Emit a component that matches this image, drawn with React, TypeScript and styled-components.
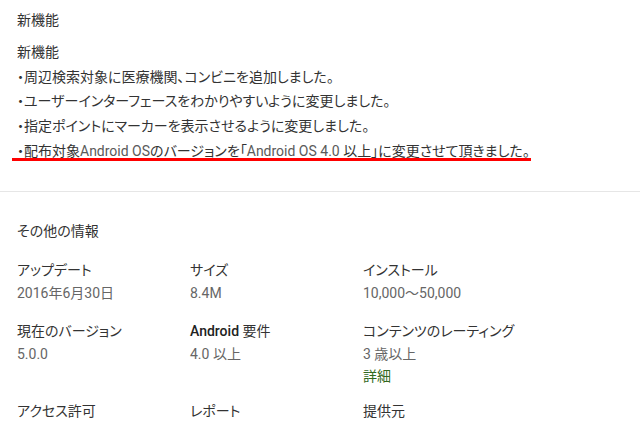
import React from "react";
import styled, { createGlobalStyle } from "styled-components";

const Global = createGlobalStyle`
  html, body { margin: 0; padding: 0; background: #fff; }
  body {
    font-family: Roboto, "Noto Sans CJK JP", sans-serif;
    font-size: 14px;
    color: #333;
    font-feature-settings: "palt";
  }
`;

const Page = styled.div`
  width: 640px;
  height: 427px;
  overflow: hidden;
  background: #fff;
`;

const Section = styled.section<{ $pt: number; $pb: number }>`
  padding: ${(p) => p.$pt}px 17px ${(p) => p.$pb}px;
`;

const Heading = styled.h2`
  margin: 0;
  font-size: 14px;
  font-weight: 400;
  line-height: 20px;
  color: #333;
`;

const Notes = styled.div`
  margin-top: 10px;
  display: flex;
  flex-direction: column;
`;

const NoteLine = styled.div<{ $marked?: boolean }>`
  line-height: 24.7px;
  height: 24.7px;
  white-space: nowrap;
  color: #333;
  position: relative;
  ${(p) =>
    p.$marked &&
    `&::after {
      content: "";
      position: absolute;
      left: -5px;
      width: 519px;
      top: 19px;
      height: 3px;
      background: #ff0000;
    }`}
`;

const Latin = styled.span`
  color: #5a5a5a;
`;

const Divider = styled.hr`
  margin: 0;
  border: 0;
  border-top: 1px solid #e6e6e6;
`;

const Grid = styled.div`
  margin-top: 18px;
  display: grid;
  grid-template-columns: 173px 173px 173px;
  row-gap: 14px;
`;

const Cell = styled.div`
  display: flex;
  flex-direction: column;
  min-height: 47px;
`;

const Label = styled.div`
  line-height: 23px;
  color: #333;
  white-space: nowrap;
`;

const Value = styled.div`
  line-height: 23px;
  color: #666;
  white-space: nowrap;
`;

const Strong = styled.span`
  font-weight: 500;
  color: #222;
`;

const Link = styled.div`
  line-height: 20px;
  color: #33691e;
`;

export default function App() {
  return (
    <Page>
      <Global />
      <Section $pt={10} $pb={28}>
        <Heading>新機能</Heading>
        <Notes>
          <NoteLine>新機能</NoteLine>
          <NoteLine>・周辺検索対象に医療機関、コンビニを追加しました。</NoteLine>
          <NoteLine>・ユーザーインターフェースをわかりやすいように変更しました。</NoteLine>
          <NoteLine>・指定ポイントにマーカーを表示させるように変更しました。</NoteLine>
          <NoteLine $marked>
            ・配布対象<Latin>Android OS</Latin>のバージョンを「<Latin>Android OS 4.0</Latin> 以上」に変更させて頂きました。
          </NoteLine>
        </Notes>
      </Section>
      <Divider />
      <Section $pt={29} $pb={0}>
        <Heading>その他の情報</Heading>
        <Grid>
          <Cell>
            <Label>アップデート</Label>
            <Value>2016年6月30日</Value>
          </Cell>
          <Cell>
            <Label>サイズ</Label>
            <Value>8.4M</Value>
          </Cell>
          <Cell>
            <Label>インストール</Label>
            <Value>10,000～50,000</Value>
          </Cell>
          <Cell>
            <Label>現在のバージョン</Label>
            <Value>5.0.0</Value>
          </Cell>
          <Cell>
            <Label>
              <Strong>Android</Strong> 要件
            </Label>
            <Value>4.0 以上</Value>
          </Cell>
          <Cell>
            <Label>コンテンツのレーティング</Label>
            <Value>3 歳以上</Value>
            <Link>詳細</Link>
          </Cell>
          <Cell>
            <Label>アクセス許可</Label>
          </Cell>
          <Cell>
            <Label>レポート</Label>
          </Cell>
          <Cell>
            <Label>提供元</Label>
          </Cell>
        </Grid>
      </Section>
    </Page>
  );
}
